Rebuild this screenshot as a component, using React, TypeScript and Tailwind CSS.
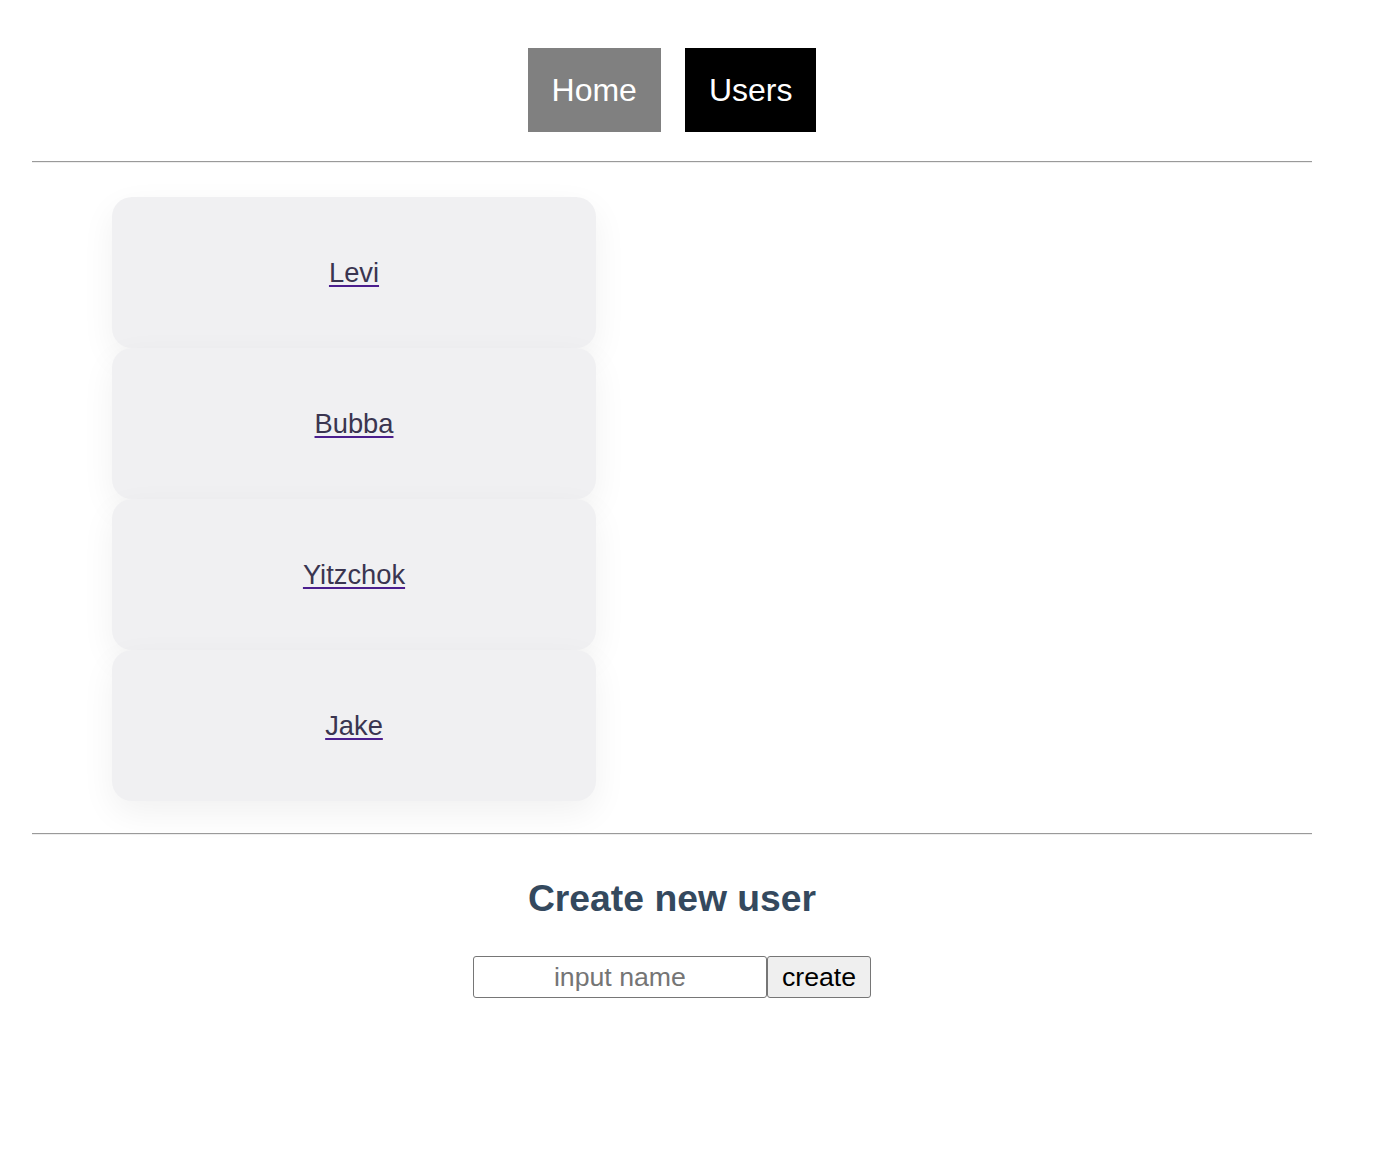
import React, { useState } from 'react';

const users = ['Levi', 'Bubba', 'Yitzchok', 'Jake'];

const Divider = () => (
  <div className="h-[2px] border-t border-b border-t-[#9a9a9a] border-b-[#eeeeee]" />
);

const App = () => {
  const [name, setName] = useState('');

  return (
    <div className="min-h-screen bg-white font-['Liberation_Sans',Arial,sans-serif]">
      <div className="ml-8 w-[1280px]">
        <nav className="flex justify-center gap-6 pt-12 pb-[29px]">
          <a className="bg-[#808080] text-white text-[32px] leading-[36px] px-6 py-6">Home</a>
          <a className="bg-black text-white text-[32px] leading-[36px] px-6 py-6">Users</a>
        </nav>

        <Divider />

        <ul className="ml-20 w-[484px] pt-[34px] pb-8">
          {users.map((u) => (
            <li
              key={u}
              className="h-[151px] flex items-center justify-center rounded-[20px] bg-[#f0f0f2] shadow-[0_12px_34px_rgba(0,0,0,0.06)]"
            >
              <a
                href="#"
                className="pt-[2px] text-[27.3px] text-[#3a3550] underline decoration-[#4b1e8e] decoration-2 underline-offset-[3px]"
              >
                {u}
              </a>
            </li>
          ))}
        </ul>

        <Divider />

        <div className="flex flex-col items-center">
          <h2 className="mt-[42px] text-[37.3px] leading-[42px] font-bold text-[#34495e]">
            Create new user
          </h2>
          <div className="mt-[37px] flex">
            <input
              value={name}
              onChange={(e) => setName(e.target.value)}
              placeholder="input name"
              className="w-[294px] h-[42px] border border-[#767676] rounded-[3px] text-center text-[26.7px] text-black placeholder:text-[#757575] outline-none"
            />
            <button className="h-[42px] px-[14px] border border-[#767676] rounded-[3px] bg-[#efefef] text-[26.7px] text-black">
              create
            </button>
          </div>
        </div>
      </div>
    </div>
  );
};

export default App;
